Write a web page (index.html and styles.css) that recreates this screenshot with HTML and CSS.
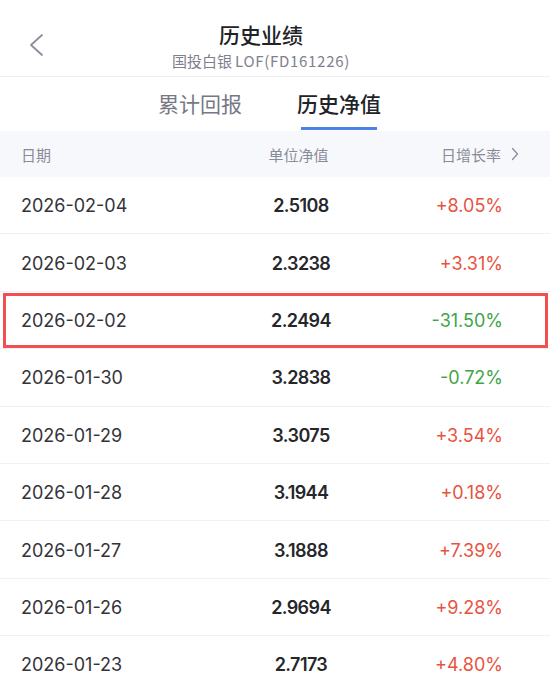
FILE: index.html
```html
<!DOCTYPE html>
<html lang="zh">
<head>
<meta charset="utf-8">
<link rel="stylesheet" href="styles.css">
</head>
<body>
<div class="page">
  <header class="nav">
    <div class="back">
      <svg width="16" height="24" viewBox="0 0 16 24"><polyline points="13,2 2,12 13,22" fill="none" stroke="#8b8f9c" stroke-width="1.8" stroke-linecap="round" stroke-linejoin="round"/></svg>
    </div>
    <div class="titles">
      <div class="title">历史业绩</div>
      <div class="subtitle">国投白银<span class="latin">LOF(FD161226)</span></div>
    </div>
  </header>
  <nav class="tabs">
    <div class="tab">累计回报</div>
    <div class="tab active">历史净值</div>
  </nav>
  <div class="thead">
    <div class="c1">日期</div>
    <div class="c2">单位净值</div>
    <div class="c3">日增长率<svg class="chev" width="8" height="14" viewBox="0 0 8 14"><polyline points="1.5,1.5 6.5,7 1.5,12.5" fill="none" stroke="#8b8f9c" stroke-width="1.3" stroke-linecap="round" stroke-linejoin="round"/></svg></div>
  </div>
  <div class="rows">
    <div class="row"><div class="c1">2026-02-04</div><div class="c2">2.5108</div><div class="c3 up">+8.05%</div></div>
    <div class="row"><div class="c1">2026-02-03</div><div class="c2">2.3238</div><div class="c3 up">+3.31%</div></div>
    <div class="row marked"><div class="c1">2026-02-02</div><div class="c2">2.2494</div><div class="c3 down">-31.50%</div><div class="mark"></div></div>
    <div class="row"><div class="c1">2026-01-30</div><div class="c2">3.2838</div><div class="c3 down">-0.72%</div></div>
    <div class="row"><div class="c1">2026-01-29</div><div class="c2">3.3075</div><div class="c3 up">+3.54%</div></div>
    <div class="row"><div class="c1">2026-01-28</div><div class="c2">3.1944</div><div class="c3 up">+0.18%</div></div>
    <div class="row"><div class="c1">2026-01-27</div><div class="c2">3.1888</div><div class="c3 up">+7.39%</div></div>
    <div class="row"><div class="c1">2026-01-26</div><div class="c2">2.9694</div><div class="c3 up">+9.28%</div></div>
    <div class="row"><div class="c1">2026-01-23</div><div class="c2">2.7173</div><div class="c3 up">+4.80%</div></div>
  </div>
</div>
</body>
</html>
```

FILE: styles.css
```css
* { box-sizing: border-box; }
html, body { margin: 0; padding: 0; background: #fff; }
body {
  width: 550px;
  height: 691px;
  overflow: hidden;
  font-family: Inter, "Noto Sans CJK SC", sans-serif;
  color: #2a2b30;
}
.nav {
  height: 77px;
  border-bottom: 1px solid #eeeff3;
  display: grid;
  grid-template-columns: 1fr auto 1fr;
  align-items: start;
  padding-right: 28px;
}
.back {
  padding: 33px 0 0 29px;
  line-height: 0;
}
.titles {
  display: flex;
  flex-direction: column;
  align-items: center;
  padding-top: 19px;
}
.title {
  font-family: "Noto Sans CJK SC", sans-serif;
  font-size: 21px;
  font-weight: 500;
  line-height: 30px;
  color: #222327;
}
.subtitle {
  font-family: "Noto Sans CJK SC", sans-serif;
  font-size: 15px;
  line-height: 22px;
  color: #7e818d;
  margin-top: 1px;
}
.subtitle .latin {
  margin-left: 3px;
  letter-spacing: 0.7px;
}
.tabs {
  height: 54px;
  display: flex;
  justify-content: center;
  gap: 55px;
  padding-right: 11px;
}
.tab {
  font-family: "Noto Sans CJK SC", sans-serif;
  font-size: 21px;
  line-height: 30px;
  padding-top: 11px;
  color: #767985;
  position: relative;
}
.tab.active {
  color: #222327;
  font-weight: 500;
}
.tab.active::after {
  content: "";
  position: absolute;
  left: 4px;
  right: 4px;
  top: 50px;
  height: 3px;
  background: #4c82e4;
}
.thead {
  height: 46px;
  background: #f7f8fc;
  display: grid;
  grid-template-columns: 230px 100px 1fr;
  align-items: center;
  padding: 0 31px 0 21px;
  font-family: "Noto Sans CJK SC", sans-serif;
  font-size: 15px;
  color: #898c98;
}
.thead .c2 { text-align: center; margin-left: -5px; }
.thead .c3 {
  display: flex;
  justify-content: flex-end;
  align-items: center;
}
.chev { margin-left: 10px; }
.row {
  height: 57.4px;
  border-bottom: 1px solid #f0f1f4;
  display: grid;
  grid-template-columns: 230px 100px 1fr;
  align-items: center;
  padding: 1px 47px 0 21px;
  font-size: 18px;
  position: relative;
}
.row .c1 { color: #333438; }
.row .c2 { text-align: center; font-weight: 600; color: #26272b; letter-spacing: -0.6px; }
.row .c3 { text-align: right; }
.up { color: #e8533f; }
.down { color: #3fa548; }
.mark {
  position: absolute;
  left: 3px;
  right: 2px;
  top: 1px;
  bottom: 0px;
  border: 3px solid #f24f50;
  pointer-events: none;
}
```
